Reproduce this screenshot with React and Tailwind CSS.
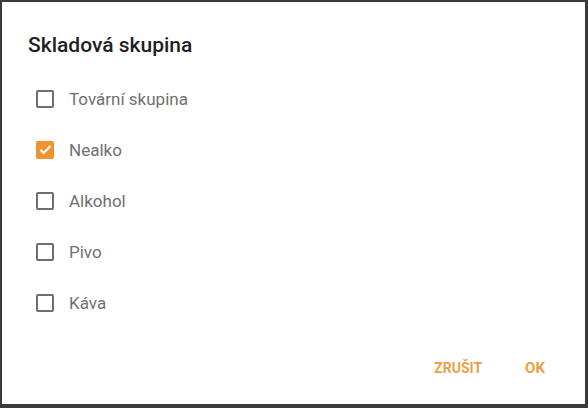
import { useState } from 'react';

const skupiny = ['Tovární skupina', 'Nealko', 'Alkohol', 'Pivo', 'Káva'];

export default function App() {
  const [vybrane, setVybrane] = useState({ Nealko: true });

  const toggle = (nazev) => {
    setVybrane(prev => ({ ...prev, [nazev]: !prev[nazev] }));
  };

  return (
    <div className="w-[588px] h-[408px] bg-[#3b3b3b] pt-[2px] pl-[2px] pr-[3px] pb-[4px]" style={{ fontFamily: 'Roboto, "Noto Sans", sans-serif' }}>
      <div className="w-full h-full bg-white flex flex-col">
        {/* Nadpis */}
        <h2 className="pt-[31px] pl-[26px] text-[21px] leading-[24px] font-medium text-[#1f1f1f]">
          Skladová skupina
        </h2>

        {/* Seznam skupin */}
        <div className="mt-[16px] flex flex-col">
          {skupiny.map((nazev) => {
            const checked = !!vybrane[nazev];
            return (
              <label key={nazev} className="h-[51px] flex items-center pl-[34px] cursor-pointer" onClick={() => toggle(nazev)}>
                {checked ? (
                  <span className="w-[18px] h-[18px] rounded-[2px] bg-[#f0922e] flex items-center justify-center">
                    <svg className="w-[15px] h-[15px]" viewBox="0 0 24 24" fill="none" stroke="white" strokeWidth={3.5}>
                      <path d="M4 12.5l5 5L20 6.5" />
                    </svg>
                  </span>
                ) : (
                  <span className="w-[18px] h-[18px] rounded-[2px] border-2 border-[#6e6e6e]" />
                )}
                <span className="ml-[15px] text-[17px] leading-[20px] text-[#707070]">{nazev}</span>
              </label>
            );
          })}
        </div>

        {/* Tlačítka */}
        <div className="mt-auto mb-[26px] flex justify-end items-center pr-[40px] gap-[43px]">
          <button className="text-[14px] leading-[20px] font-bold text-[#eba045]">ZRUŠIT</button>
          <button className="text-[15px] leading-[20px] font-bold text-[#eba045]">OK</button>
        </div>
      </div>
    </div>
  );
}
